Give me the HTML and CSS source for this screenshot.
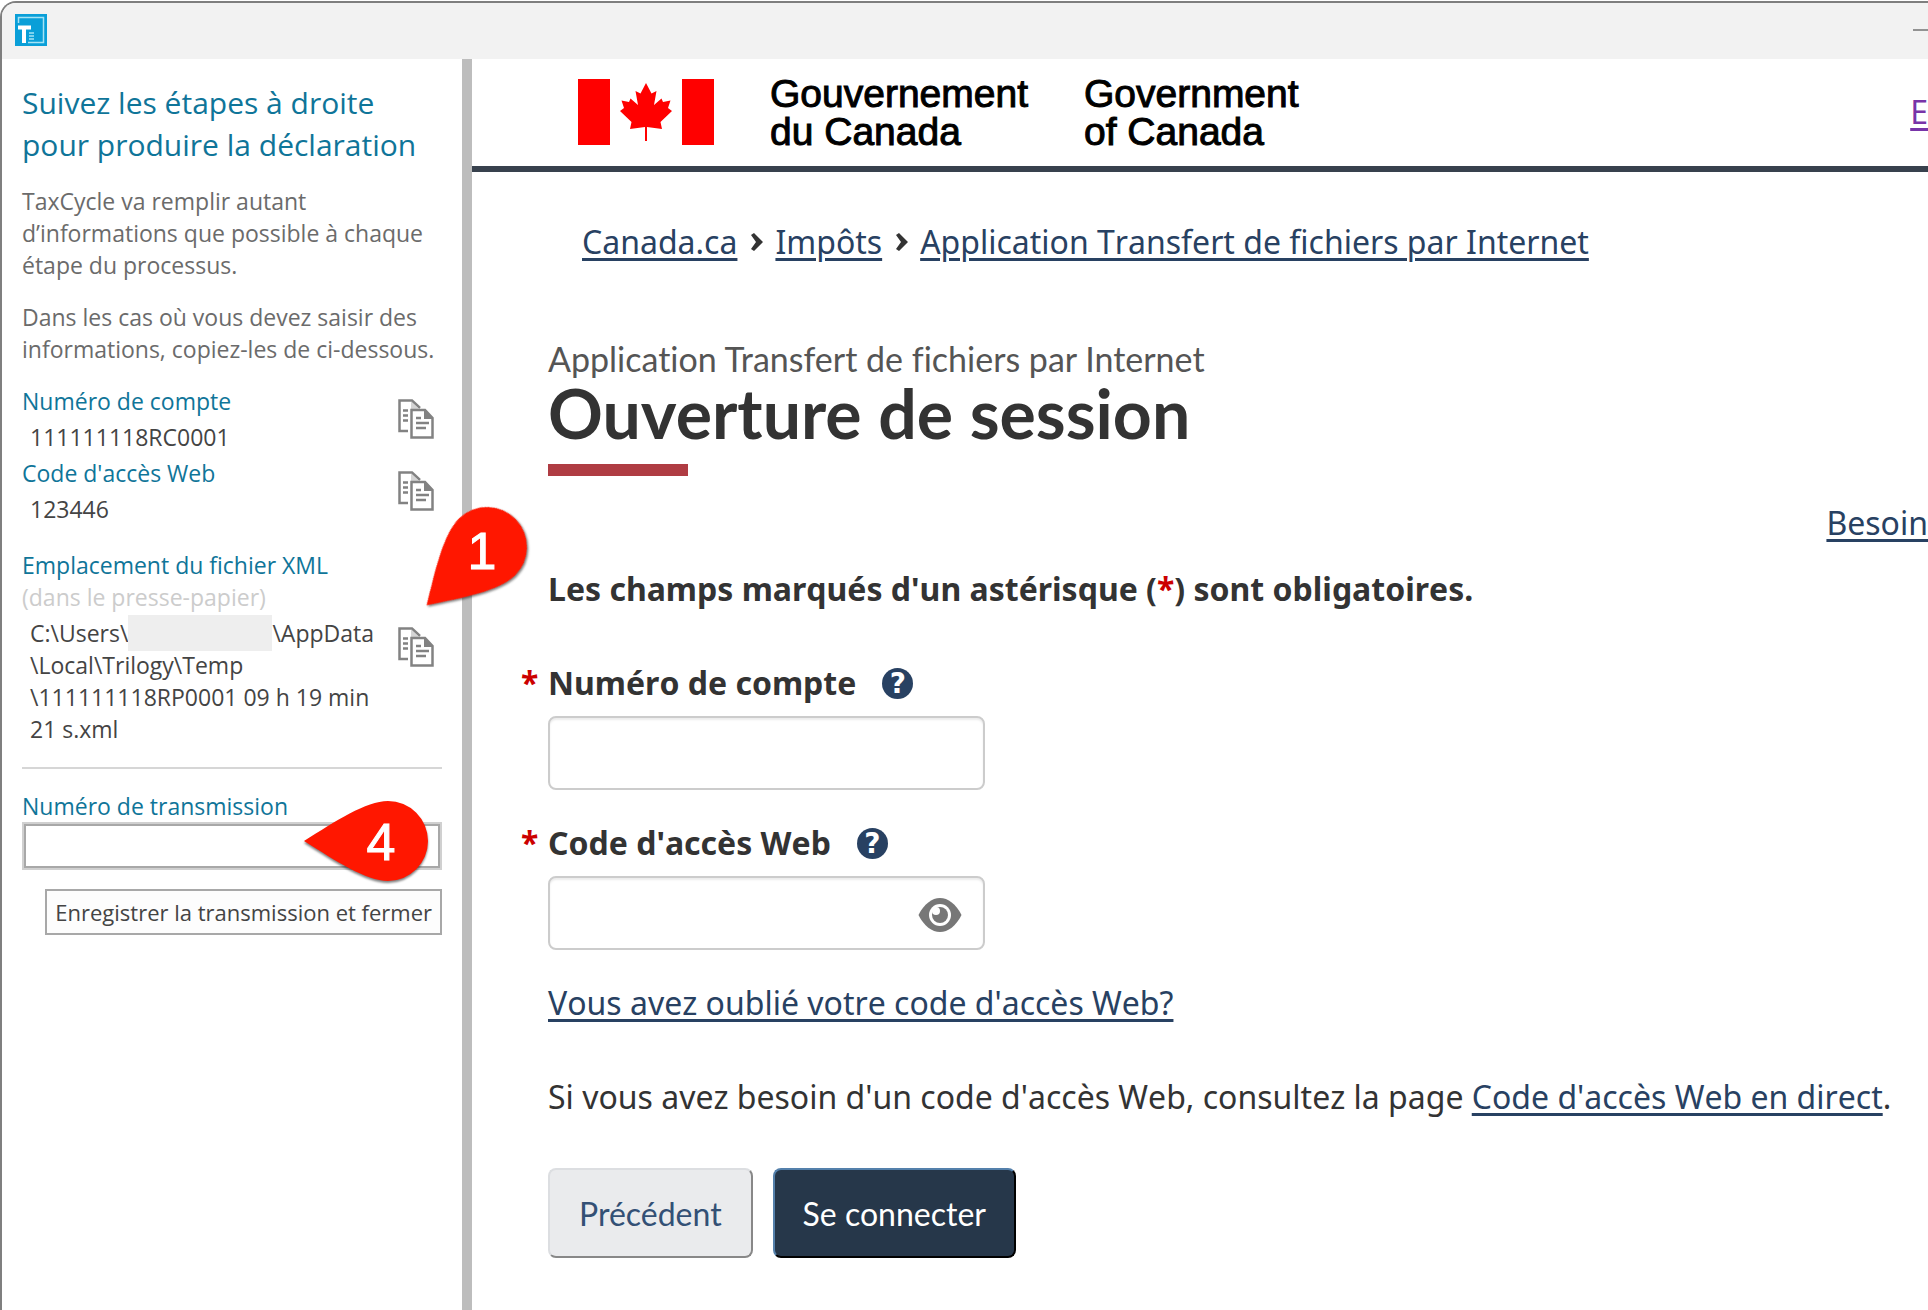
FILE: index.html
```
<!doctype html>
<html lang="fr">
<head>
    <meta charset="UTF-8">
    <meta name="viewport" content="width=device-width, initial-scale=1.0">
    <title>Ouverture de session</title>
    <link rel="stylesheet" href="styles.css">
</head>
<body>
    <svg class="defs" width="0" height="0" aria-hidden="true">
        <symbol id="copy" viewBox="0 0 36 40">
            <path d="M10 32H1.500V1.500H14L22 9" fill="none" stroke="#828282" stroke-width="2.500"/>
            <path d="M13 2.500L21 10H13Z" fill="#d4d4d4"/>
            <path d="M5 11.500h5M5 16.500h5M5 21.500h5" stroke="#828282" stroke-width="2.500"/>
            <path d="M13.500 11H27L34.500 19V38.500H13.500Z" fill="#fff" stroke="#828282" stroke-width="2.500"/>
            <path d="M26 11L35 20H26Z" fill="#828282"/>
            <path d="M18 19h5M18 24h13M18 29h10" stroke="#828282" stroke-width="2.500"/>
        </symbol>
        <symbol id="chevron" viewBox="0 0 14 20">
            <path d="M2 3L5 1L14 10L5 19L2 17L7 10Z" fill="#333"/>
        </symbol>
    </svg>

    <div class="window">
        <header class="titlebar">
            <svg class="app-icon" viewBox="0 0 32 32">
                <rect width="32" height="32" fill="#0a9fd8"/>
                <path d="M3.500 9V3.500H28.500V28.500H13" fill="none" stroke="#a5e3f5" stroke-width="1.500"/>
                <path d="M3 13.500H16M9 13V29" fill="none" stroke="#fff" stroke-width="4"/>
                <path d="M14 19h5M14 22h5M14 25h5" stroke="#a5e3f5" stroke-width="1.500"/>
            </svg>
            <button class="minimize" aria-label="Réduire"></button>
        </header>

        <div class="content">
            <aside class="sidebar">
                <h2>Suivez les étapes à droite pour produire la déclaration</h2>
                <p>TaxCycle va remplir autant d’informations que possible à chaque étape du processus.</p>
                <p>Dans les cas où vous devez saisir des informations, copiez-les de ci-dessous.</p>

                <div class="item">
                    <div>
                        <h3>Numéro de compte</h3>
                        <div class="value">111111118RC0001</div>
                    </div>
                    <button class="copy" aria-label="Copier"><svg><use href="#copy"/></svg></button>
                </div>
                <div class="item">
                    <div>
                        <h3>Code d'accès Web</h3>
                        <div class="value">123446</div>
                    </div>
                    <button class="copy" aria-label="Copier"><svg><use href="#copy"/></svg></button>
                </div>
                <div class="item file">
                    <div>
                        <h3>Emplacement du fichier XML</h3>
                        <div class="hint">(dans le presse-papier)</div>
                        <div class="value">C:\Users\<span class="masked"></span>\AppData<br>\Local\Trilogy\Temp<br>\111111118RP0001 09 h 19 min<br>21 s.xml</div>
                    </div>
                    <button class="copy" aria-label="Copier"><svg><use href="#copy"/></svg></button>
                    <svg class="pin pin-one" viewBox="-90 -90 180 180">
                        <path transform="rotate(-44)" d="M-84 0C-52 -20 -22 -40 0 -40A40 40 0 0 1 0 40C-22 40 -52 20 -84 0Z"/>
                        <text x="-5" y="22">1</text>
                    </svg>
                </div>

                <hr>

                <form class="transmission">
                    <label for="transmission">Numéro de transmission</label>
                    <input type="text" id="transmission">
                    <button type="button">Enregistrer la transmission et fermer</button>
                    <svg class="pin pin-four" viewBox="-90 -90 180 180">
                        <path d="M-84 0C-52 -20 -22 -40 0 -40A40 40 0 0 1 0 40C-22 40 -52 20 -84 0Z"/>
                        <text x="-7" y="19">4</text>
                    </svg>
                </form>
            </aside>

            <main class="page">
                <div class="brand">
                    <svg class="flag" viewBox="0 0 136 66">
                        <path d="M0 0H32V66H0ZM104 0H136V66H104Z"/>
                        <path d="M68 4L73.500 14.500L78.500 12L76 26L83.500 19.500L85 23L92.500 21.500L90 29L94 32L82.500 43L84 50L69 48V62H67V48L52 50L53.500 43L42 32L46 29L43.500 21.500L51 23L52.500 19.500L60 26L57.500 12L62.500 14.500Z"/>
                    </svg>
                    <div>Gouvernement<br>du Canada</div>
                    <div>Government<br>of Canada</div>
                    <a class="lang" href="#">E</a>
                </div>

                <nav class="breadcrumb">
                    <a href="#">Canada.ca</a>
                    <svg><use href="#chevron"/></svg>
                    <a href="#">Impôts</a>
                    <svg><use href="#chevron"/></svg>
                    <a href="#">Application Transfert de fichiers par Internet</a>
                </nav>

                <div class="body">
                    <div class="subtitle">Application Transfert de fichiers par Internet</div>
                    <h1>Ouverture de session</h1>
                    <a class="help-link" href="#">Besoin</a>

                    <p class="required">Les champs marqués d'un astérisque (<span class="star">*</span>) sont obligatoires.</p>

                    <form>
                        <div class="label-row">
                            <span class="star">*</span>
                            <label for="account">Numéro de compte</label>
                            <button type="button" class="help" aria-label="Aide">?</button>
                        </div>
                        <div class="field">
                            <input type="text" id="account">
                        </div>
                        <div class="label-row">
                            <span class="star">*</span>
                            <label for="code">Code d'accès Web</label>
                            <button type="button" class="help" aria-label="Aide">?</button>
                        </div>
                        <div class="field">
                            <input type="password" id="code">
                            <button type="button" class="eye" aria-label="Afficher">
                                <svg viewBox="0 0 44 34">
                                    <path d="M0.500 17C6 6 14 0 22 0S38 6 43.500 17C38 28 30 34 22 34S6 28 0.500 17Z" fill="#777"/>
                                    <circle cx="22" cy="17" r="11" fill="#fff"/>
                                    <circle cx="22" cy="17" r="8" fill="#777"/>
                                    <circle cx="18" cy="13" r="4" fill="#fff"/>
                                </svg>
                            </button>
                        </div>
                        <a class="forgot" href="#">Vous avez oublié votre code d'accès Web?</a>
                        <p class="note">Si vous avez besoin d'un code d'accès Web, consultez la page <a href="#">Code d'accès Web en direct</a>.</p>
                        <div class="actions">
                            <button type="button" class="btn">Précédent</button>
                            <button type="button" class="btn primary">Se connecter</button>
                        </div>
                    </form>
                </div>
            </main>
        </div>
    </div>
</body>
</html>
```
FILE: styles.css
```
* {
    box-sizing: border-box;
}

body {
    margin: 0;
    padding-top: 1px;
    background-color: #ffffff;
    font-family: "Noto Sans", sans-serif;
    color: #333333;
}

h1, h2, h3, p {
    margin: 0;
    font-weight: normal;
}

button {
    font-family: inherit;
    cursor: pointer;
}

.defs {
    position: absolute;
}

/* Window */
.window {
    display: flex;
    flex-direction: column;
    min-height: calc(100vh - 1px);
    border: 2px solid #7f7f7f;
    border-right: none;
    border-bottom: none;
    border-top-left-radius: 16px;
    overflow: hidden;
}

.titlebar {
    display: flex;
    align-items: center;
    justify-content: space-between;
    height: 56px;
    padding: 0 0 2px 13px;
    background-color: #f2f2f2;
}

.app-icon {
    width: 32px;
    height: 32px;
}

.minimize {
    width: 15px;
    height: 2px;
    padding: 0;
    border: none;
    background-color: #929292;
}

.content {
    display: flex;
    flex: 1;
}

/* Sidebar */
.sidebar {
    flex: none;
    width: 470px;
    padding: 23px 20px;
    border-right: 10px solid #bdbdbd;
    font-family: "Open Sans", sans-serif;
    font-size: 23px;
    line-height: 32px;
    color: #6b6b6b;
}

.sidebar h2 {
    margin-bottom: 19px;
    font-size: 30px;
    line-height: 42px;
    color: #0f7599;
}

.sidebar p {
    margin-bottom: 20px;
}

.sidebar h3, .transmission label {
    font-size: 23px;
    color: #0f7599;
}

.item {
    display: flex;
    align-items: center;
    justify-content: space-between;
    position: relative;
    margin-bottom: 4px;
    padding-right: 8px;
}

.file {
    margin-top: 24px;
}

.value {
    margin-top: 4px;
    padding-left: 8px;
    color: #444444;
    white-space: nowrap;
}

.hint {
    color: #cccccc;
}

.masked {
    display: inline-block;
    width: 144px;
    height: 36px;
    margin: -2px 0;
    vertical-align: top;
    background-color: #eeeeee;
}

.copy {
    flex: none;
    width: 36px;
    height: 40px;
    padding: 0;
    border: none;
    background: none;
}

.copy svg {
    display: block;
    width: 36px;
    height: 40px;
}

.sidebar hr {
    margin: 22px 0 21px;
    border: none;
    border-top: 2px solid #d6d6d6;
}

.transmission {
    display: flex;
    flex-direction: column;
    position: relative;
}

.transmission input {
    height: 48px;
    border: 2px solid #d0d0d0;
    box-shadow: inset 0 0 0 2px #a8a8a8;
}

.transmission button {
    align-self: flex-end;
    height: 46px;
    margin-top: 19px;
    padding: 0 8px;
    border: 2px solid #a8a8a8;
    background-color: #fdfdfd;
    font-size: 22px;
    color: #444444;
    white-space: nowrap;
}

/* Numbered pins over the sidebar */
.pin {
    position: absolute;
    width: 180px;
    height: 180px;
    pointer-events: none;
}

.pin path {
    fill: #ff1700;
    filter: drop-shadow(0 2px 1px rgba(0, 0, 0, 0.5));
}

.pin text {
    font-family: "Liberation Sans", sans-serif;
    font-size: 52px;
    fill: #ffffff;
    stroke: #ffffff;
    stroke-width: 1px;
    text-anchor: middle;
}

.pin-one {
    top: -92px;
    right: -135px;
}

.pin-four {
    top: -39px;
    right: -36px;
}

/* Page */
.page {
    flex: 1;
    min-width: 0;
    font-variant-ligatures: none;
}

.brand {
    display: flex;
    align-items: center;
    height: 113px;
    padding: 0 0 2px 106px;
    border-bottom: 6px solid #38414d;
    font-family: "Liberation Sans", sans-serif;
    font-size: 39px;
    line-height: 38px;
    color: #000000;
    -webkit-text-stroke: 1px #000000;
}

.brand div {
    margin-left: 56px;
    padding-top: 2px;
}

.flag {
    width: 136px;
    height: 66px;
    fill: #ff0000;
}

.lang {
    margin-left: auto;
    font-family: "Noto Sans", sans-serif;
    font-size: 32px;
    color: #7834a8;
    -webkit-text-stroke: 0;
}

a {
    color: #284162;
    text-decoration-thickness: 3px;
    text-underline-offset: 4px;
}

.breadcrumb {
    display: flex;
    align-items: center;
    gap: 12px;
    padding: 46px 0 0 110px;
    font-size: 32px;
    font-kerning: none;
    line-height: 48px;
}

.breadcrumb svg {
    width: 14px;
    height: 20px;
}

.body {
    display: flex;
    flex-direction: column;
    padding: 71px 0 0 76px;
    font-size: 32px;
    font-kerning: none;
    line-height: 48px;
}

.subtitle {
    font-family: Lato, sans-serif;
    font-size: 34px;
    font-kerning: normal;
    line-height: 44px;
    color: #555555;
}

h1 {
    font-family: Lato, sans-serif;
    font-size: 68px;
    font-weight: bold;
    font-kerning: normal;
    line-height: 64px;
}

h1::after {
    content: "";
    display: block;
    width: 140px;
    height: 12px;
    margin-top: 19px;
    background-color: #af3c43;
}

.help-link {
    align-self: flex-end;
    margin-top: 23px;
}

.required {
    margin-top: 18px;
    margin-bottom: 46px;
    font-weight: bold;
}

.star {
    color: #cc0000;
    font-weight: bold;
}

.label-row {
    display: flex;
    align-items: center;
    margin-left: -27px;
    font-weight: bold;
}

.label-row .star {
    width: 27px;
}

.help {
    width: 31px;
    height: 31px;
    margin-left: 26px;
    padding: 0;
    border: none;
    border-radius: 50%;
    background-color: #284162;
    font-family: "DejaVu Sans", sans-serif;
    font-size: 28px;
    font-weight: bold;
    line-height: 31px;
    color: #ffffff;
}

.field {
    display: flex;
    align-items: center;
    width: 437px;
    height: 74px;
    margin: 9px 0 29px;
    border: 2px solid #cccccc;
    border-radius: 8px;
    box-shadow: inset 0 2px 2px rgba(0, 0, 0, 0.08);
}

.field input {
    flex: 1;
    min-width: 0;
    height: 100%;
    border: none;
    background: none;
    font-size: 32px;
}

.eye {
    width: 44px;
    height: 34px;
    margin: 4px 21px 0 0;
    padding: 0;
    border: none;
    background: none;
}

.eye svg {
    display: block;
}

.note {
    margin-top: 46px;
    white-space: nowrap;
}

.actions {
    display: flex;
    gap: 20px;
    margin-top: 47px;
}

.btn {
    height: 90px;
    padding: 0 29px;
    border: 2px solid;
    border-color: #dcdee1 #888888 #888888 #dcdee1;
    border-radius: 8px;
    background-color: #eaebed;
    font-family: Lato, sans-serif;
    font-size: 32px;
    color: #335075;
}

.primary {
    padding: 0 28px;
    border-color: #5480ab #000000 #000000 #5480ab;
    background-color: #26374a;
    color: #ffffff;
}
```
